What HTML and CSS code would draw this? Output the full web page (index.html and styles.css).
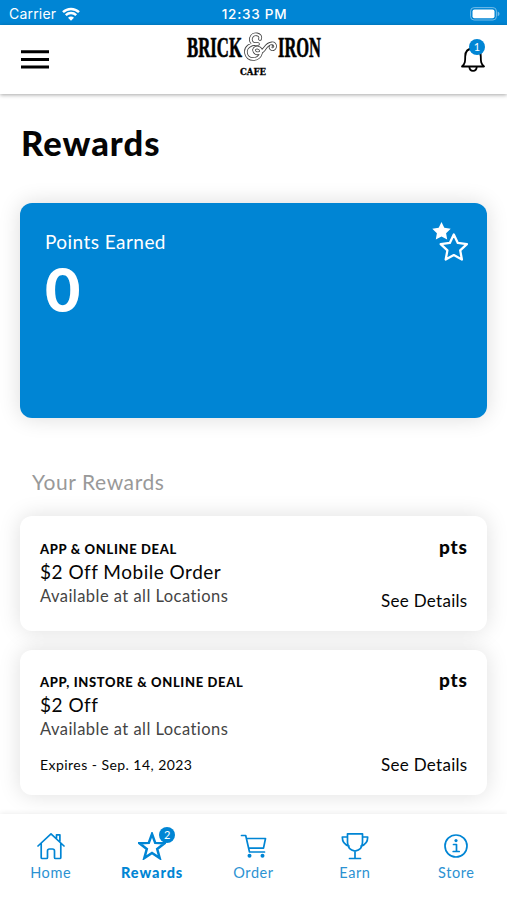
FILE: index.html
```html
<!DOCTYPE html>
<html lang="en">
<head>
<meta charset="utf-8">
<title>Rewards</title>
<link rel="stylesheet" href="styles.css">
</head>
<body>
<div class="status">
  <div class="carrier"><span>Carrier</span>
    <svg width="18" height="14" viewBox="0 0 18 14" fill="none" stroke="#fff" stroke-width="2.5"><path d="M1 5.2C5.5.8 12.5.8 17 5.2M3.8 8.2c3-2.8 7.4-2.8 10.4 0"/><path d="M6 10.7c1.7-1.6 4.3-1.6 6 0L9 13.8z" fill="#fff" stroke="none"/></svg>
  </div>
  <time>12:33 PM</time>
  <svg class="battery" width="30" height="14" viewBox="0 0 30 14"><rect x=".6" y=".6" width="25.8" height="12.4" rx="3.5" fill="none" stroke="#73bce8"/><rect x="2.5" y="2.5" width="22" height="8.8" rx="2" fill="#fff"/><path d="M27.7 4.4c2.4.8 2.4 4 0 4.8z" fill="#73bce8"/></svg>
</div>
<header class="header">
  <svg class="menu" width="28" height="19" viewBox="0 0 28 19" stroke="#000" stroke-width="3" stroke-linecap="square"><path d="M1.5 1.8h25M1.5 9.4h25M1.5 17.1h25"/></svg>
  <svg class="logo" width="142" height="46" viewBox="0 0 142 46">
    <text class="logo-name" x="2" y="26" textLength="55" lengthAdjust="spacingAndGlyphs">BRICK</text>
    <text class="logo-name" x="93" y="26" textLength="43" lengthAdjust="spacingAndGlyphs">IRON</text>
    <g fill="none" stroke-linecap="round" stroke-linejoin="round"><path class="amp-out" d="M75 8c2-5-7-7-9-1-1 4 2 7 7 6-8-1-13 4-12 9 1 8 13 8 15 0 1-6-6-7-7-3 1 6 8 3 11-2 4-6 11-6 10-1-1 4-6 2-4-1"/><path class="amp-in" d="M75 8c2-5-7-7-9-1-1 4 2 7 7 6-8-1-13 4-12 9 1 8 13 8 15 0 1-6-6-7-7-3 1 6 8 3 11-2 4-6 11-6 10-1-1 4-6 2-4-1"/></g>
    <text class="logo-sub" x="55" y="44" textLength="26" lengthAdjust="spacingAndGlyphs">CAFE</text>
  </svg>
  <div class="bell">
    <svg width="24" height="28" viewBox="0 0 24 28" fill="none" stroke="#000" stroke-width="1.8" stroke-linejoin="round"><path d="M1 22.5c3.3-3 3.2-5.5 3.2-10 0-5 3-8 7.8-8s7.8 3 7.8 8c0 4.500-.1 7 3.200 10z"/><path d="M8.300 22.500c.3 5.800 7.200 5.800 7.500 0"/></svg>
    <span class="badge">1</span>
  </div>
</header>
<main class="content">
  <h1>Rewards</h1>
  <section class="points">
    <div><div class="points-label">Points Earned</div><div class="points-value">0</div></div>
    <svg width="36" height="39" viewBox="0 0 36 39" stroke="#fff"><path d="M9.500 0l2.800 5.800 6.400.9-4.600 4.500 1.100 6.400-5.700-3-5.700 3 1.100-6.400L.3 6.700l6.400-.9z" fill="#fff" stroke="none"/><path d="M21.800 12.500l4 8.400 9.100 1.200-6.700 6.300 1.700 9.100-8.100-4.400-8.100 4.400 1.700-9.100-6.700-6.300 9.100-1.200z" fill="#0085d4" stroke-width="2.300" stroke-linejoin="round"/></svg>
  </section>
  <h2>Your Rewards</h2>
  <article class="card">
    <div class="info"><div class="kind">APP &amp; ONLINE DEAL</div><div class="title">$2 Off Mobile Order</div><div class="where">Available at all Locations</div></div>
    <div class="side"><strong>pts</strong><span>See Details</span></div>
  </article>
  <article class="card tall">
    <div class="info"><div class="kind">APP, INSTORE &amp; ONLINE DEAL</div><div class="title">$2 Off</div><div class="where">Available at all Locations</div><div class="expires">Expires - Sep. 14, 2023</div></div>
    <div class="side"><strong>pts</strong><span>See Details</span></div>
  </article>
</main>
<nav class="tabs">
  <div class="tab"><svg width="28" height="28" viewBox="0 0 28 28"><path d="M1 14L14 1.800 27 14M4.200 11.500V25.500q0 1 1 1h4.300q1 0 1-1V19q0-2 2-2h3q2 0 2 2v6.500q0 1 1 1h4.300q1 0 1-1V11.500M19.500 6V2.800h3.400V9"/></svg><span>Home</span></div>
  <div class="tab active"><div class="tab-icon"><svg width="28" height="28" viewBox="0 0 28 28"><path class="thick" d="M14 2l3.200 8.900 9.300.4-7.300 5.700 2.500 9.100-7.700-5.200-7.700 5.200L8.800 17 1.500 11.300l9.300-.4z"/></svg><span class="badge">2</span></div><span>Rewards</span></div>
  <div class="tab"><svg width="28" height="28" viewBox="0 0 28 28"><path d="M2.500 3.500h4.200l3.800 16.500h15M7.500 6.500h19l-2 9.700H9.800"/><circle cx="10.500" cy="23.700" r="2" class="dot"/><circle cx="23.500" cy="23.700" r="2" class="dot"/></svg><span>Order</span></div>
  <div class="tab"><svg width="28" height="28" viewBox="0 0 28 28"><path d="M6.500 1.800h15v8.500q0 7.500-7.500 8.800-7.500-1.300-7.500-8.800zM6.500 5H1.300q0 7.300 6.700 9M21.500 5h5.200q0 7.300-6.700 9M14 19v7M8.500 26.500h11"/></svg><span>Earn</span></div>
  <div class="tab"><svg width="28" height="28" viewBox="0 0 28 28"><circle cx="14" cy="14" r="11"/><circle cx="14" cy="8.600" r="1.600" class="dot"/><path d="M11.500 12.500h3v7M11.200 19.500h6"/></svg><span>Store</span></div>
</nav>
</body>
</html>
```
FILE: styles.css
```css
* { box-sizing: border-box; }
body { margin: 0; width: 507px; height: 900px; overflow: hidden; display: flex; flex-direction: column; background: #fff; color: #050505; font-family: Lato, "Open Sans", sans-serif; font-variant-ligatures: none; white-space: nowrap; }
svg { display: block; flex: none; }
.status { height: 25px; flex: none; background: #0085d4; color: #fff; display: grid; grid-template-columns: 1fr auto 1fr; align-items: center; padding: 1px 7px 0 9px; font: 14px/24px Inter, sans-serif; }
.carrier { display: flex; align-items: center; gap: 6px; letter-spacing: .2px; }
.status time { font-weight: 500; font-size: 13.5px; letter-spacing: .75px; margin-top: 1px; }
.battery { justify-self: end; }
.header { height: 69px; flex: none; display: flex; justify-content: space-between; padding: 0 21px; position: relative; z-index: 1; background: #fff; box-shadow: 0 1px 4px rgba(0,0,0,.35); }
.menu { margin-top: 25px; }
.logo { margin: 6px 0 0 1px; overflow: visible; }
.logo-name { font: bold 29px "Liberation Serif", serif; stroke: #050505; stroke-width: .7px; }
.logo-sub { font: bold 9px "DejaVu Serif", serif; stroke: #050505; stroke-width: .3px; }
.amp-out { stroke: #444; stroke-width: 3.6px; }
.amp-in { stroke: #fff; stroke-width: 2px; }
.bell { margin: 19px 1px 0 0; position: relative; }
.badge { position: absolute; width: 16px; height: 16px; border-radius: 50%; background: #0085d4; color: #fff; font-size: 11px; line-height: 16px; font-weight: 400; letter-spacing: 0; text-align: center; }
.bell .badge { top: -5px; right: 0; }
.content { flex: 1; min-height: 0; padding: 29px 20px 0; }
h1 { margin: 0 0 0 1px; font-size: 34.5px; line-height: 40px; font-weight: 900; letter-spacing: 1px; }
.points { margin-top: 40px; height: 215px; border-radius: 12px; background: #0085d4; color: #fff; display: flex; justify-content: space-between; padding: 27px 19px 0 25px; box-shadow: 0 0 22px rgba(0,0,0,.14); }
.points svg { margin-top: -8px; }
.points-label { font-size: 19px; line-height: 24px; letter-spacing: .45px; }
.points-value { font-size: 61px; line-height: 70px; font-weight: 900; }
h2 { margin: 50px 0 20px 12px; font-size: 21px; line-height: 28px; font-weight: 400; color: #999; letter-spacing: .6px; }
.card { height: 115px; border-radius: 12px; background: #fff; box-shadow: 0 0 22px rgba(0,0,0,.13); padding: 24px 20px 0; display: flex; justify-content: space-between; }
.card.tall { height: 145px; margin-top: 19px; padding-top: 23px; }
.kind { font-size: 13px; line-height: 18px; font-weight: 900; letter-spacing: .65px; }
.title { font-size: 19px; line-height: 28px; letter-spacing: .5px; }
.where { font-size: 16.5px; line-height: 20px; color: #444; letter-spacing: .46px; }
.expires { font-size: 14px; line-height: 20px; margin-top: 16px; letter-spacing: .45px; }
.side { display: flex; flex-direction: column; align-items: flex-end; }
.side strong { font-size: 19px; line-height: 22px; margin-top: -4px; font-weight: 900; letter-spacing: .8px; margin-right: -.8px; }
.side span { font-size: 17px; line-height: 22px; margin-top: 32px; letter-spacing: .3px; margin-right: -.5px; }
.tall .side span { margin-top: 63px; }
.tabs { height: 86px; flex: none; background: #fff; display: grid; grid-template-columns: repeat(5, 1fr); padding-top: 18px; position: relative; box-shadow: 0 -1px 5px rgba(0,0,0,.07); }
.tab { display: flex; flex-direction: column; align-items: center; color: #2c92d2; font-size: 14.5px; line-height: 20px; letter-spacing: .6px; }
.tab svg { fill: none; stroke: #0085d4; stroke-width: 1.7px; stroke-linejoin: round; stroke-linecap: round; }
.tab .thick { stroke-width: 2.5px; stroke-linejoin: miter; }
.tab .dot { fill: #0085d4; stroke: none; }
.tab > span { margin-top: 3px; }
.active { color: #0085d4; font-weight: 900; letter-spacing: .95px; }
.tab-icon { position: relative; }
.tab-icon .badge { top: -5px; right: -9px; }
```
